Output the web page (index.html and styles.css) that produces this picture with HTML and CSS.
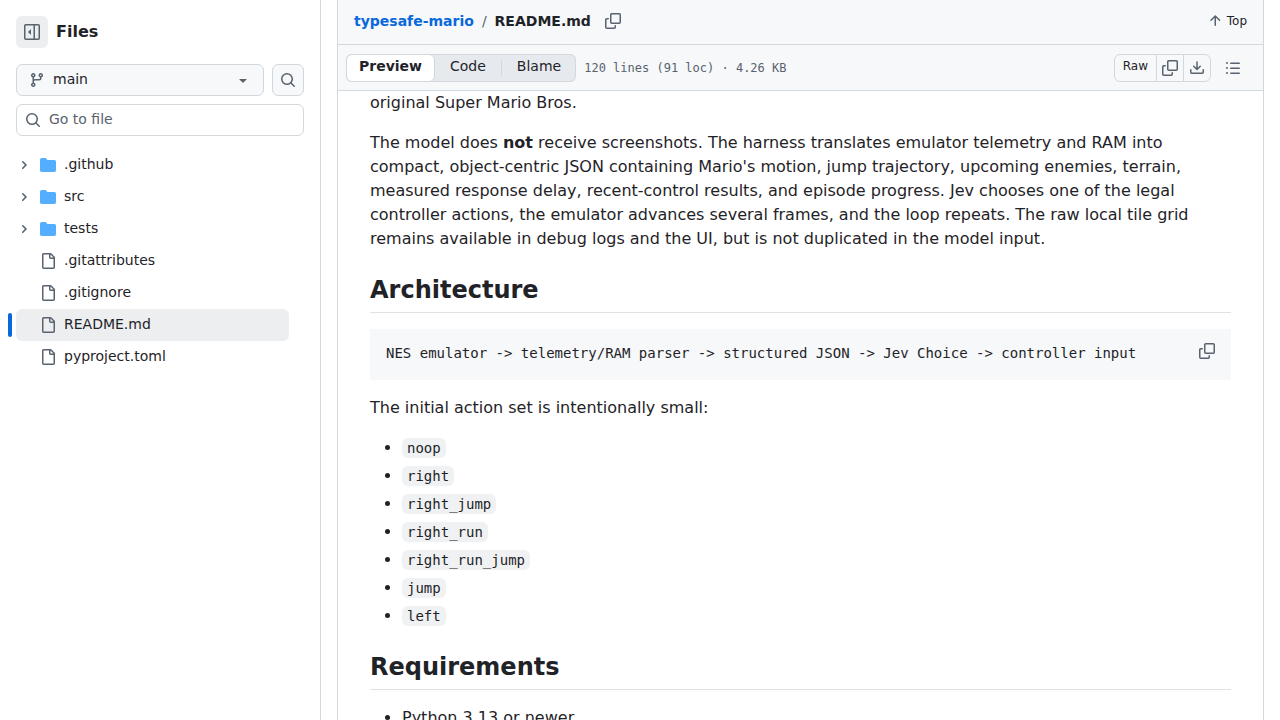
FILE: index.html
```html
<!DOCTYPE html>
<html lang="en">
<head>
<meta charset="utf-8">
<meta name="viewport" content="width=device-width, initial-scale=1">
<title>typesafe-mario/README.md</title>
<link rel="stylesheet" href="styles.css">
</head>
<body>
<svg class="sprite" aria-hidden="true">
  <symbol id="i-copy" viewBox="0 0 16 16"><path d="M0 6.75C0 5.784.784 5 1.75 5h1.5a.75.75 0 0 1 0 1.5h-1.5a.25.25 0 0 0-.25.25v7.5c0 .138.112.25.25.25h7.5a.25.25 0 0 0 .25-.25v-1.5a.75.75 0 0 1 1.5 0v1.5A1.75 1.75 0 0 1 9.25 16h-7.5A1.75 1.75 0 0 1 0 14.25Z"/><path d="M5 1.75C5 .784 5.784 0 6.75 0h7.5C15.216 0 16 .784 16 1.75v7.5A1.75 1.75 0 0 1 14.25 11h-7.5A1.75 1.75 0 0 1 5 9.25Zm1.75-.25a.25.25 0 0 0-.25.25v7.5c0 .138.112.25.25.25h7.5a.25.25 0 0 0 .25-.25v-7.5a.25.25 0 0 0-.25-.25Z"/></symbol>
  <symbol id="i-search" viewBox="0 0 16 16"><path d="M10.68 11.74a6 6 0 0 1-7.922-8.982 6 6 0 0 1 8.982 7.922l3.04 3.04a.749.749 0 1 1-1.06 1.06ZM11.5 7a4.499 4.499 0 1 0-8.997 0A4.499 4.499 0 0 0 11.5 7Z"/></symbol>
  <symbol id="i-panel" viewBox="0 0 16 16"><path d="m4.177 7.823 2.396-2.396A.25.25 0 0 1 7 5.604v4.792a.25.25 0 0 1-.427.177L4.177 8.177a.25.25 0 0 1 0-.354Z"/><path d="M0 1.75C0 .784.784 0 1.75 0h12.5C15.216 0 16 .784 16 1.75v12.5A1.75 1.75 0 0 1 14.25 16H1.75A1.75 1.75 0 0 1 0 14.25Zm1.75-.25a.25.25 0 0 0-.25.25v12.5c0 .138.112.25.25.25H9.5v-13Zm12.5 13a.25.25 0 0 0 .25-.25V1.75a.25.25 0 0 0-.25-.25H11v13Z"/></symbol>
  <symbol id="i-branch" viewBox="0 0 16 16"><path d="M9.5 3.25a2.25 2.25 0 1 1 3 2.122V6A2.5 2.5 0 0 1 10 8.5H6a1 1 0 0 0-1 1v1.128a2.251 2.251 0 1 1-1.5 0V5.372a2.25 2.25 0 1 1 1.5 0v1.836A2.493 2.493 0 0 1 6 7h4a1 1 0 0 0 1-1v-.628A2.25 2.25 0 0 1 9.5 3.25Zm-6 0a.75.75 0 1 0 1.5 0 .75.75 0 0 0-1.5 0Zm8.25-.75a.75.75 0 1 0 0 1.5.75.75 0 0 0 0-1.5ZM4.25 12a.75.75 0 1 0 0 1.5.75.75 0 0 0 0-1.5Z"/></symbol>
  <symbol id="i-caret" viewBox="0 0 16 16"><path d="m4.427 7.427 3.396 3.396a.25.25 0 0 0 .354 0l3.396-3.396A.25.25 0 0 0 11.396 7H4.604a.25.25 0 0 0-.177.427Z"/></symbol>
  <symbol id="i-chevron" viewBox="0 0 12 12"><path d="M4.7 10c-.2 0-.4-.1-.5-.2-.3-.3-.3-.8 0-1.1L6.9 6 4.2 3.3c-.3-.3-.3-.8 0-1.1.3-.3.8-.3 1.1 0l3.3 3.2c.3.3.3.8 0 1.1L5.3 9.7c-.2.2-.4.3-.6.3Z"/></symbol>
  <symbol id="i-folder" viewBox="0 0 16 16"><path d="M1.75 1A1.75 1.75 0 0 0 0 2.75v10.5C0 14.216.784 15 1.75 15h12.5A1.75 1.75 0 0 0 16 13.25v-8.5A1.75 1.75 0 0 0 14.25 3H7.5a.25.25 0 0 1-.2-.1l-.9-1.2C6.07 1.26 5.55 1 5 1H1.75Z"/></symbol>
  <symbol id="i-file" viewBox="0 0 16 16"><path d="M2 1.75C2 .784 2.784 0 3.75 0h6.586c.464 0 .909.184 1.237.513l2.914 2.914c.329.328.513.773.513 1.237v9.586A1.75 1.75 0 0 1 13.25 16h-9.5A1.75 1.75 0 0 1 2 14.25Zm1.75-.25a.25.25 0 0 0-.25.25v12.5c0 .138.112.25.25.25h9.5a.25.25 0 0 0 .25-.25V6h-2.75A1.75 1.75 0 0 1 9 4.25V1.5Zm6.75.062V4.25c0 .138.112.25.25.25h2.688l-.011-.013-2.914-2.914-.013-.011Z"/></symbol>
  <symbol id="i-up" viewBox="0 0 16 16"><path d="M3.47 7.78a.75.75 0 0 1 0-1.06l4.25-4.25a.75.75 0 0 1 1.06 0l4.25 4.25a.751.751 0 0 1-1.06 1.06L9 4.81v7.44a.75.75 0 0 1-1.5 0V4.81L4.53 7.78a.75.75 0 0 1-1.06 0Z"/></symbol>
  <symbol id="i-download" viewBox="0 0 16 16"><path d="M2.75 14A1.75 1.75 0 0 1 1 12.25v-2.5a.75.75 0 0 1 1.5 0v2.5c0 .138.112.25.25.25h10.5a.25.25 0 0 0 .25-.25v-2.5a.75.75 0 0 1 1.5 0v2.5A1.75 1.75 0 0 1 13.25 14Z"/><path d="M7.25 7.689V2a.75.75 0 0 1 1.5 0v5.689l1.97-1.969a.749.749 0 1 1 1.06 1.06l-3.25 3.25a.749.749 0 0 1-1.06 0L4.22 6.78a.749.749 0 1 1 1.06-1.06l1.97 1.969Z"/></symbol>
  <symbol id="i-list" viewBox="0 0 16 16"><path d="M5.75 2.5h8.5a.75.75 0 0 1 0 1.5h-8.5a.75.75 0 0 1 0-1.5Zm0 5h8.5a.75.75 0 0 1 0 1.5h-8.5a.75.75 0 0 1 0-1.5Zm0 5h8.5a.75.75 0 0 1 0 1.5h-8.5a.75.75 0 0 1 0-1.5ZM2 14a1 1 0 1 1 0-2 1 1 0 0 1 0 2Zm1-6a1 1 0 1 1-2 0 1 1 0 0 1 2 0ZM2 4a1 1 0 1 1 0-2 1 1 0 0 1 0 2Z"/></symbol>
</svg>

<div class="app">
  <aside class="sidebar">
    <div class="sidebar-head">
      <button class="panel-toggle" type="button" aria-label="Collapse file tree"><svg class="icon"><use href="#i-panel"/></svg></button>
      <h2 class="sidebar-title">Files</h2>
    </div>
    <div class="branch-row">
      <label class="branch">
        <svg class="icon"><use href="#i-branch"/></svg>
        <select class="branch-select" aria-label="Branch"><option>main</option></select>
        <svg class="icon"><use href="#i-caret"/></svg>
      </label>
      <button class="search-button" type="button" aria-label="Search this repository"><svg class="icon"><use href="#i-search"/></svg></button>
    </div>
    <label class="file-search">
      <svg class="icon"><use href="#i-search"/></svg>
      <input class="file-input" type="text" placeholder="Go to file" aria-label="Go to file">
    </label>
    <nav aria-label="Files">
      <ul class="tree">
        <li><a class="tree-item" href="#"><svg class="chevron"><use href="#i-chevron"/></svg><svg class="icon folder"><use href="#i-folder"/></svg><span class="tree-name">.github</span></a></li>
        <li><a class="tree-item" href="#"><svg class="chevron"><use href="#i-chevron"/></svg><svg class="icon folder"><use href="#i-folder"/></svg><span class="tree-name">src</span></a></li>
        <li><a class="tree-item" href="#"><svg class="chevron"><use href="#i-chevron"/></svg><svg class="icon folder"><use href="#i-folder"/></svg><span class="tree-name">tests</span></a></li>
        <li><a class="tree-item file" href="#"><svg class="icon"><use href="#i-file"/></svg><span class="tree-name">.gitattributes</span></a></li>
        <li><a class="tree-item file" href="#"><svg class="icon"><use href="#i-file"/></svg><span class="tree-name">.gitignore</span></a></li>
        <li><a class="tree-item file current" href="#" aria-current="page"><svg class="icon"><use href="#i-file"/></svg><span class="tree-name">README.md</span></a></li>
        <li><a class="tree-item file" href="#"><svg class="icon"><use href="#i-file"/></svg><span class="tree-name">pyproject.toml</span></a></li>
      </ul>
    </nav>
  </aside>

  <main class="content">
    <div class="panel">
      <header class="path-bar">
        <nav class="breadcrumb" aria-label="Breadcrumb">
          <a class="repo-link" href="#">typesafe-mario</a>
          <span class="slash">/</span>
          <h1 class="file-name">README.md</h1>
        </nav>
        <button class="icon-button" type="button" aria-label="Copy path"><svg class="icon"><use href="#i-copy"/></svg></button>
        <button class="top-button" type="button"><svg class="icon"><use href="#i-up"/></svg>Top</button>
      </header>
      <div class="toolbar">
        <div class="tabs">
          <button class="tab active" type="button" aria-pressed="true">Preview</button>
          <button class="tab" type="button">Code</button>
          <span class="tab-divider"></span>
          <button class="tab" type="button">Blame</button>
        </div>
        <span class="stats">120 lines (91 loc) · 4.26 KB</span>
        <div class="actions">
          <button class="action raw" type="button">Raw</button>
          <button class="action" type="button" aria-label="Copy raw file"><svg class="icon"><use href="#i-copy"/></svg></button>
          <button class="action" type="button" aria-label="Download raw file"><svg class="icon"><use href="#i-download"/></svg></button>
        </div>
        <button class="icon-button" type="button" aria-label="Outline"><svg class="icon"><use href="#i-list"/></svg></button>
      </div>
      <article class="markdown">
        <p>original Super Mario Bros.</p>
        <p>The model does <strong>not</strong> receive screenshots. The harness translates emulator telemetry and RAM into compact, object-centric JSON containing Mario's motion, jump trajectory, upcoming enemies, terrain, measured response delay, recent-control results, and episode progress. Jev chooses one of the legal controller actions, the emulator advances several frames, and the loop repeats. The raw local tile grid remains available in debug logs and the UI, but is not duplicated in the model input.</p>
        <h2>Architecture</h2>
        <div class="code-block">
          <pre><code>NES emulator -&gt; telemetry/RAM parser -&gt; structured JSON -&gt; Jev Choice -&gt; controller input</code></pre>
          <button class="icon-button" type="button" aria-label="Copy code"><svg class="icon"><use href="#i-copy"/></svg></button>
        </div>
        <p>The initial action set is intentionally small:</p>
        <ul>
          <li><code>noop</code></li>
          <li><code>right</code></li>
          <li><code>right_jump</code></li>
          <li><code>right_run</code></li>
          <li><code>right_run_jump</code></li>
          <li><code>jump</code></li>
          <li><code>left</code></li>
        </ul>
        <h2>Requirements</h2>
        <ul>
          <li>Python 3.13 or newer</li>
        </ul>
      </article>
    </div>
  </main>
</div>
</body>
</html>
```
FILE: styles.css
```css
:root {
  --fg: #1f2328;
  --muted: #59636e;
  --border: #d3d8dc;
  --line: #dfe3e6;
  --subtle: #f6f8fa;
  --accent: #0969da;
  --mono: "DejaVu Sans Mono", monospace;
}

* { box-sizing: border-box; }

body {
  margin: 0;
  background: #fff;
  color: var(--fg);
  font: 14px/20px "DejaVu Sans", sans-serif;
}

button, input, select { font: inherit; color: inherit; }

button {
  display: flex;
  align-items: center;
  justify-content: center;
  padding: 0;
  border: 0;
  background: none;
  cursor: pointer;
}

a { color: inherit; text-decoration: none; }

.sprite { display: none; }

.icon {
  flex: none;
  width: 16px;
  height: 16px;
  fill: var(--muted);
}

.app {
  display: flex;
  height: 100vh;
  overflow: hidden;
}

/* File tree */

.sidebar {
  flex: none;
  display: flex;
  flex-direction: column;
  gap: 8px;
  width: 321px;
  padding: 16px;
  border-right: 1px solid var(--border);
}

.sidebar-head {
  display: flex;
  align-items: center;
  gap: 8px;
  margin-bottom: 8px;
}

.panel-toggle {
  width: 32px;
  height: 32px;
  border-radius: 6px;
  background: #eceef0;
}

.sidebar-title {
  margin: 0;
  font-size: 16px;
  line-height: 24px;
}

.branch-row { display: flex; gap: 8px; }

.branch {
  flex: 1;
  display: flex;
  align-items: center;
  gap: 8px;
  height: 32px;
  padding: 0 12px;
  border: 1px solid var(--border);
  border-radius: 6px;
  background: var(--subtle);
}

.branch-select {
  flex: 1;
  min-width: 0;
  height: 24px;
  padding: 0 0 2px;
  border: 0;
  background: none;
  appearance: none;
}

.search-button {
  width: 32px;
  height: 32px;
  border: 1px solid var(--border);
  border-radius: 6px;
  background: var(--subtle);
}

.file-search {
  display: flex;
  align-items: center;
  gap: 8px;
  height: 32px;
  padding: 0 8px;
  border: 1px solid var(--border);
  border-radius: 6px;
}

.file-input {
  flex: 1;
  min-width: 0;
  height: 24px;
  padding: 0 0 2px;
  border: 0;
  outline: 0;
  background: none;
}

.file-input::placeholder { color: var(--muted); opacity: 1; }

.tree {
  margin: 5px 15px 0 0;
  padding: 0;
  list-style: none;
}

.tree-item {
  position: relative;
  display: flex;
  align-items: center;
  gap: 8px;
  height: 32px;
  padding: 0 8px 0 2px;
  border-radius: 6px;
}

.tree-item.file { padding-left: 24px; }

.tree-name { padding-bottom: 2px; }

.current { background: #eceef0; }

.current::before {
  content: "";
  position: absolute;
  top: 4px;
  left: -8px;
  width: 4px;
  height: 24px;
  border-radius: 6px;
  background: var(--accent);
}

.chevron {
  flex: none;
  width: 12px;
  height: 12px;
  margin-right: 2px;
  fill: var(--muted);
}

.folder { fill: #54aeff; }

/* File viewer */

.content {
  flex: 1;
  min-width: 0;
  padding: 0 16px;
}

.panel {
  min-height: 100%;
  border: solid var(--border);
  border-width: 0 1px;
}

.path-bar {
  display: flex;
  align-items: center;
  gap: 8px;
  height: 45px;
  padding: 0 16px 2px;
  border-bottom: 1px solid var(--border);
  background: var(--subtle);
}

.breadcrumb {
  display: flex;
  align-items: center;
  gap: 8px;
}

.repo-link { color: var(--accent); font-weight: 600; }

.slash { color: var(--muted); }

.file-name { margin: 0; font-size: 14px; line-height: 20px; }

.icon-button { width: 28px; height: 28px; }

.top-button {
  gap: 4px;
  margin-left: auto;
  font-size: 12px;
}

.toolbar {
  display: flex;
  align-items: center;
  gap: 8px;
  height: 46px;
  padding: 0 16px 0 8px;
  border-bottom: 1px solid var(--border);
  background: var(--subtle);
}

.tabs {
  display: flex;
  align-items: center;
  height: 28px;
  border-radius: 6px;
  background: #e6eaef;
  box-shadow: inset 0 0 0 1px var(--border);
}

.tab {
  height: 28px;
  padding: 0 15px 3px;
  border-radius: 6px;
}

.tab.active {
  padding: 0 12px 3px;
  border: 1px solid var(--border);
  background: #fff;
  font-weight: 600;
}

.tab-divider { width: 1px; height: 16px; background: var(--border); }

.stats {
  color: var(--muted);
  font: 12px/16px var(--mono);
}

.actions {
  display: flex;
  height: 28px;
  margin-left: auto;
  border: 1px solid var(--border);
  border-radius: 6px;
}

.action { width: 27px; border-left: 1px solid var(--border); }

.action.raw {
  width: auto;
  padding: 0 8px 3px;
  border-left: 0;
  font-size: 12px;
}

/* Rendered document */

.markdown {
  padding: 0 32px;
  font-size: 16px;
  line-height: 24px;
}

.markdown p { margin: 0 0 16px; }

.markdown h2 {
  margin: 24px 0 16px;
  padding-bottom: 7px;
  border-bottom: 1px solid var(--line);
  font-size: 24px;
  line-height: 30px;
}

.markdown ul { margin: 0 0 16px; padding-left: 32px; }

.markdown li + li { margin-top: 4px; }

.markdown code { font-family: var(--mono); font-size: 14px; }

.markdown li code {
  padding: 2px 5px;
  border-radius: 6px;
  background: #eff1f2;
}

.code-block {
  display: flex;
  align-items: flex-start;
  justify-content: space-between;
  margin-bottom: 16px;
  padding: 8px 10px 8px 16px;
  background: var(--subtle);
}

.code-block pre {
  min-width: 0;
  margin: 0;
  padding: 6px 0 9px;
  font: 14px/20px var(--mono);
}
```
